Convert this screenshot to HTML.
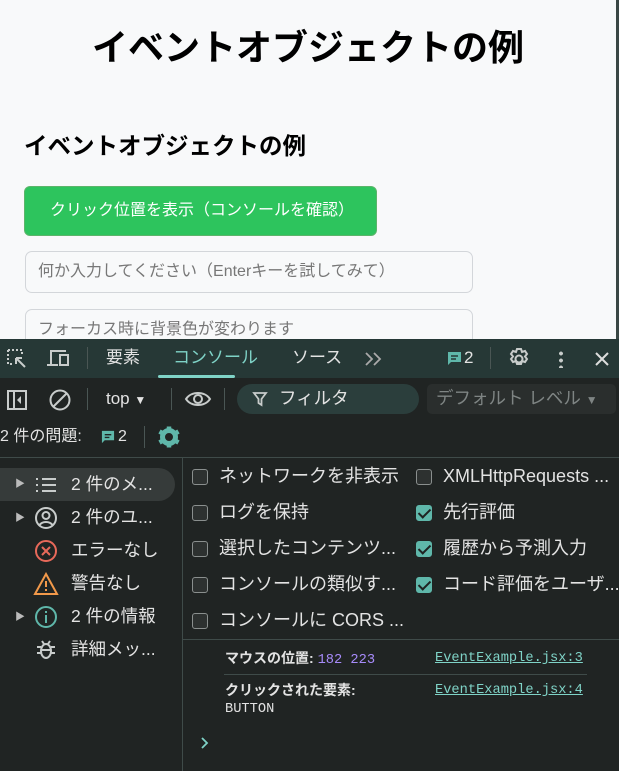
<!DOCTYPE html>
<html><head><meta charset="utf-8"><style>
*{margin:0;padding:0;box-sizing:border-box}
body{width:619px;height:771px;overflow:hidden;background:#202423;font-family:"Liberation Sans","Noto Sans CJK JP",sans-serif;position:relative;color:#e3e3e3;line-height:1.2}
.page{position:absolute;left:0;top:0;width:616px;height:339px;background:#f8f9fa;overflow:hidden;color:#000}
.sb{position:absolute;left:616px;top:0;width:3px;height:339px;background:#3a4745}
h1{position:absolute;left:0;width:616px;top:26px;text-align:center;font-size:36px;font-weight:bold;line-height:1.2}
h2{position:absolute;left:24px;top:132px;font-size:23.5px;font-weight:bold;line-height:1.2}
.btn{position:absolute;left:24px;top:186px;width:353px;height:50px;background:#2dc45d;border:1px solid #5cb46a;border-radius:6px;color:#fff;font-size:16px;line-height:48px;padding-left:25px}
.inp{position:absolute;left:25px;width:448px;height:42px;border:1px solid #d3d6da;border-radius:7px;background:#f8f9fa;color:#777;font-size:16px;padding-left:12px;line-height:40px}
.a{position:absolute;white-space:nowrap;line-height:1.2}
.tabbar{position:absolute;left:0;top:339px;width:619px;height:39px;background:#263836}
.t{font-size:17px;color:#e3e3e3}
.sep{position:absolute;width:1px;background:#4a5654}
.cb{position:absolute;width:16px;height:16px;border:1.5px solid #8a8f8e;border-radius:3px;background:#2d3130}
.cb.on{background:#5fb7aa;border-color:#5fb7aa}
.cb.on:after{content:"";position:absolute;left:4px;top:0px;width:5px;height:10px;border:solid #1f2322;border-width:0 2px 2px 0;transform:rotate(45deg)}
.lbl{font-size:18px;color:#e3e3e3}
.sl{font-size:17.5px;color:#e3e3e3}
.mono{font-family:"Liberation Mono","Noto Sans CJK JP",monospace;font-size:13.7px}
</style></head><body>
<div class="page">
<h1>イベントオブジェクトの例</h1>
<h2>イベントオブジェクトの例</h2>
<div class="btn">クリック位置を表示（コンソールを確認）</div>
<div class="inp" style="top:251px">何か入力してください（Enterキーを試してみて）</div>
<div class="inp" style="top:309px">フォーカス時に背景色が変わります</div>
</div>
<div class="sb"></div>

<div class="tabbar"></div>
<svg class="a" style="left:6px;top:348px" width="24" height="22" viewBox="0 0 24 22" fill="none" stroke="#c8cccb" stroke-width="2"><path d="M2 2h14v4M2 2v14h4" stroke-dasharray="2 2"/><path d="M10 10l9 9M10 10h6M10 10v6"/></svg>
<svg class="a" style="left:46px;top:348px" width="26" height="22" viewBox="0 0 26 22" fill="none" stroke="#c8cccb" stroke-width="2"><path d="M5 16V3h15M1 17h11"/><rect x="14" y="7" width="8" height="10"/></svg>
<div class="sep" style="left:87px;top:347px;height:22px"></div>
<div class="a t" style="left:106px;top:348px">要素</div>
<div class="a t" style="left:173px;top:348px;color:#7fd3c7">コンソール</div>
<div class="a" style="left:158px;top:375px;width:77px;height:3px;background:#7fd3c7;border-radius:2px"></div>
<div class="a t" style="left:292px;top:348px">ソース</div>
<svg class="a" style="left:364px;top:351px" width="20" height="16" viewBox="0 0 20 16" fill="none" stroke="#aaa" stroke-width="1.8"><path d="M2 2l6 6-6 6M10 2l6 6-6 6"/></svg>
<svg class="a" style="left:447px;top:351px" width="15" height="15" viewBox="0 0 15 15"><path d="M1 1h13v10H4l-3 3z" fill="#5fb7aa"/><path d="M4 5h7M4 8h5" stroke="#263836" stroke-width="1.5"/></svg>
<div class="a" style="left:464px;top:348px;font-size:17px">2</div>
<div class="sep" style="left:490px;top:347px;height:22px"></div>
<svg class="a" style="left:507px;top:347px" width="24" height="24" viewBox="0 0 24 24" fill="none" stroke="#c8cccb" stroke-width="2"><circle cx="12" cy="12" r="3.5"/><path d="M10 2h4l1 3 3-1 2 3-2 2.5 2 2.5-2 3-3-1-1 3h-4l-1-3-3 1-2-3 2-2.5-2-2.5 2-3 3 1z"/></svg>
<div class="a" style="left:559px;top:350px;width:4px;height:18px;background:radial-gradient(circle,#c8cccb 1.8px,transparent 2px) 0 0/4px 7px"></div>
<svg class="a" style="left:594px;top:351px" width="16" height="16" viewBox="0 0 16 16" stroke="#ddd" stroke-width="2"><path d="M2 2l12 12M14 2L2 14"/></svg>

<svg class="a" style="left:6px;top:389px" width="22" height="22" viewBox="0 0 22 22" fill="none" stroke="#c8cccb" stroke-width="2"><rect x="2" y="2" width="18" height="18"/><path d="M8 2v18"/><path d="M15 7l-4 4 4 4z" fill="#c8cccb" stroke="none"/></svg>
<svg class="a" style="left:48px;top:388px" width="24" height="24" viewBox="0 0 24 24" fill="none" stroke="#c8cccb" stroke-width="2"><circle cx="12" cy="12" r="9.5"/><path d="M5 19L19 5"/></svg>
<div class="sep" style="left:87px;top:388px;height:22px"></div>
<div class="a" style="left:106px;top:389px;font-size:17px">top <span style="font-size:12px">▼</span></div>
<div class="sep" style="left:171px;top:388px;height:22px"></div>
<svg class="a" style="left:184px;top:389px" width="28" height="20" viewBox="0 0 28 20" fill="none" stroke="#c8cccb" stroke-width="2"><path d="M2 10C7 2 21 2 26 10 21 18 7 18 2 10z"/><circle cx="14" cy="10" r="4"/></svg>
<div class="sep" style="left:224px;top:388px;height:22px"></div>
<div class="a" style="left:237px;top:384px;width:182px;height:30px;background:#2b3e3c;border-radius:15px"></div>
<svg class="a" style="left:252px;top:391px" width="16" height="16" viewBox="0 0 16 16" fill="none" stroke="#c8cccb" stroke-width="1.8"><path d="M2 2h12L9.5 8v6L6.5 12V8z"/></svg>
<div class="a" style="left:279px;top:388px;font-size:17.5px">フィルタ</div>
<div class="a" style="left:427px;top:384px;width:189px;height:30px;background:#2a2e2d;border-radius:5px"></div>
<div class="a" style="left:436px;top:388px;font-size:17.5px;color:#7f8584">デフォルト レベル <span style="font-size:12px">▼</span></div>

<div class="a" style="left:0;top:427px;font-size:16px">2 件の問題:</div>
<svg class="a" style="left:101px;top:430px" width="14" height="14" viewBox="0 0 15 15"><path d="M1 1h13v10H4l-3 3z" fill="#5fb7aa"/><path d="M4 5h7M4 8h5" stroke="#202423" stroke-width="1.5"/></svg>
<div class="a" style="left:118px;top:427px;font-size:16px">2</div>
<div class="sep" style="left:144px;top:426px;height:22px"></div>
<svg class="a" style="left:157px;top:425px" width="24" height="24" viewBox="0 0 24 24"><circle cx="12" cy="12" r="6.5" fill="none" stroke="#5fb7aa" stroke-width="5"/><g stroke="#5fb7aa" stroke-width="4.5"><path d="M12 1.5v4M12 18.5v4M2.5 6.5l3.5 2M18 15.5l3.5 2M2.5 17.5l3.5-2M18 8.5l3.5-2"/></g></svg>
<div class="a" style="left:0;top:457px;width:619px;height:1px;background:#3f4b49"></div>
<div class="a" style="left:182px;top:458px;width:1px;height:313px;background:#3f4b49"></div>

<div class="a" style="left:0;top:468px;width:175px;height:33px;background:#363b3a;border-radius:0 17px 17px 0"></div>
<div class="a" style="left:15px;top:479px;font-size:10px;color:#bbb">▶</div>
<div class="a" style="left:15px;top:513px;font-size:10px;color:#bbb">▶</div>
<div class="a" style="left:15px;top:612px;font-size:10px;color:#bbb">▶</div>
<svg class="a" style="left:34px;top:476px" width="24" height="18" viewBox="0 0 24 18" stroke="#c8cccb" stroke-width="2"><path d="M2 3h2M2 9h2M2 15h2M8 3h14M8 9h14M8 15h14"/></svg>
<svg class="a" style="left:34px;top:506px" width="24" height="24" viewBox="0 0 24 24" fill="none" stroke="#c8cccb" stroke-width="2"><circle cx="12" cy="12" r="10"/><circle cx="12" cy="9.5" r="3.5"/><path d="M5.5 19c3-4 10-4 13 0"/></svg>
<svg class="a" style="left:34px;top:539px" width="24" height="24" viewBox="0 0 24 24" fill="none" stroke="#e8695a" stroke-width="2"><circle cx="12" cy="12" r="10"/><path d="M8 8l8 8M16 8l-8 8"/></svg>
<svg class="a" style="left:33px;top:572px" width="26" height="24" viewBox="0 0 26 24" fill="none" stroke="#f2994a" stroke-width="2"><path d="M13 2L24 22H2z"/><path d="M13 9v6M13 17v2"/></svg>
<svg class="a" style="left:34px;top:605px" width="24" height="24" viewBox="0 0 24 24" fill="none" stroke="#5fb7aa" stroke-width="2"><circle cx="12" cy="12" r="10"/><path d="M12 10v8M12 6v2"/></svg>
<svg class="a" style="left:36px;top:638px" width="20" height="22" viewBox="0 0 20 22" fill="none" stroke="#c8cccb" stroke-width="2"><ellipse cx="10" cy="13" rx="5" ry="7"/><path d="M1 9h4M15 9h4M1 15h4M15 15h4M6 3l2 3M14 3l-2 3M5 12h10"/></svg>
<div class="a sl" style="left:71px;top:474px">2 件のメ...</div>
<div class="a sl" style="left:71px;top:507px">2 件のユ...</div>
<div class="a sl" style="left:71px;top:540px">エラーなし</div>
<div class="a sl" style="left:71px;top:573px">警告なし</div>
<div class="a sl" style="left:71px;top:606px">2 件の情報</div>
<div class="a sl" style="left:71px;top:639px">詳細メッ...</div>

<div class="cb" style="left:192px;top:469px"></div><div class="a lbl" style="left:219px;top:466px">ネットワークを非表示</div>
<div class="cb" style="left:192px;top:505px"></div><div class="a lbl" style="left:219px;top:502px">ログを保持</div>
<div class="cb" style="left:192px;top:541px"></div><div class="a lbl" style="left:219px;top:538px">選択したコンテンツ...</div>
<div class="cb" style="left:192px;top:577px"></div><div class="a lbl" style="left:219px;top:574px">コンソールの類似す...</div>
<div class="cb" style="left:192px;top:613px"></div><div class="a lbl" style="left:219px;top:610px">コンソールに CORS ...</div>
<div class="cb" style="left:416px;top:469px"></div><div class="a lbl" style="left:443px;top:466px">XMLHttpRequests ...</div>
<div class="cb on" style="left:416px;top:505px"></div><div class="a lbl" style="left:443px;top:502px">先行評価</div>
<div class="cb on" style="left:416px;top:541px"></div><div class="a lbl" style="left:443px;top:538px">履歴から予測入力</div>
<div class="cb on" style="left:416px;top:577px"></div><div class="a lbl" style="left:443px;top:574px">コード評価をユーザ...</div>
<div class="a" style="left:183px;top:639px;width:436px;height:1px;background:#3f4b49"></div>

<div class="a" style="left:225px;top:650px;font-size:14px;font-weight:bold;color:#e3e3e3">マウスの位置: <span class="mono" style="color:#a78bfa;font-weight:normal">182 223</span></div>
<div class="a mono" style="left:435px;top:651px;color:#7fd3c7;text-decoration:underline">EventExample.jsx:3</div>
<div class="a" style="left:224px;top:674px;width:363px;height:1px;background:#3f4b49"></div>
<div class="a" style="left:225px;top:682px;font-size:14px;font-weight:bold">クリックされた要素:</div>
<div class="a mono" style="left:435px;top:683px;color:#7fd3c7;text-decoration:underline">EventExample.jsx:4</div>
<div class="a mono" style="left:225px;top:702px">BUTTON</div>
<svg class="a" style="left:201px;top:737px" width="8" height="12" viewBox="0 0 8 12" fill="none" stroke="#7fd3c7" stroke-width="1.8"><path d="M1 1l5 5-5 5"/></svg>
</body></html>
